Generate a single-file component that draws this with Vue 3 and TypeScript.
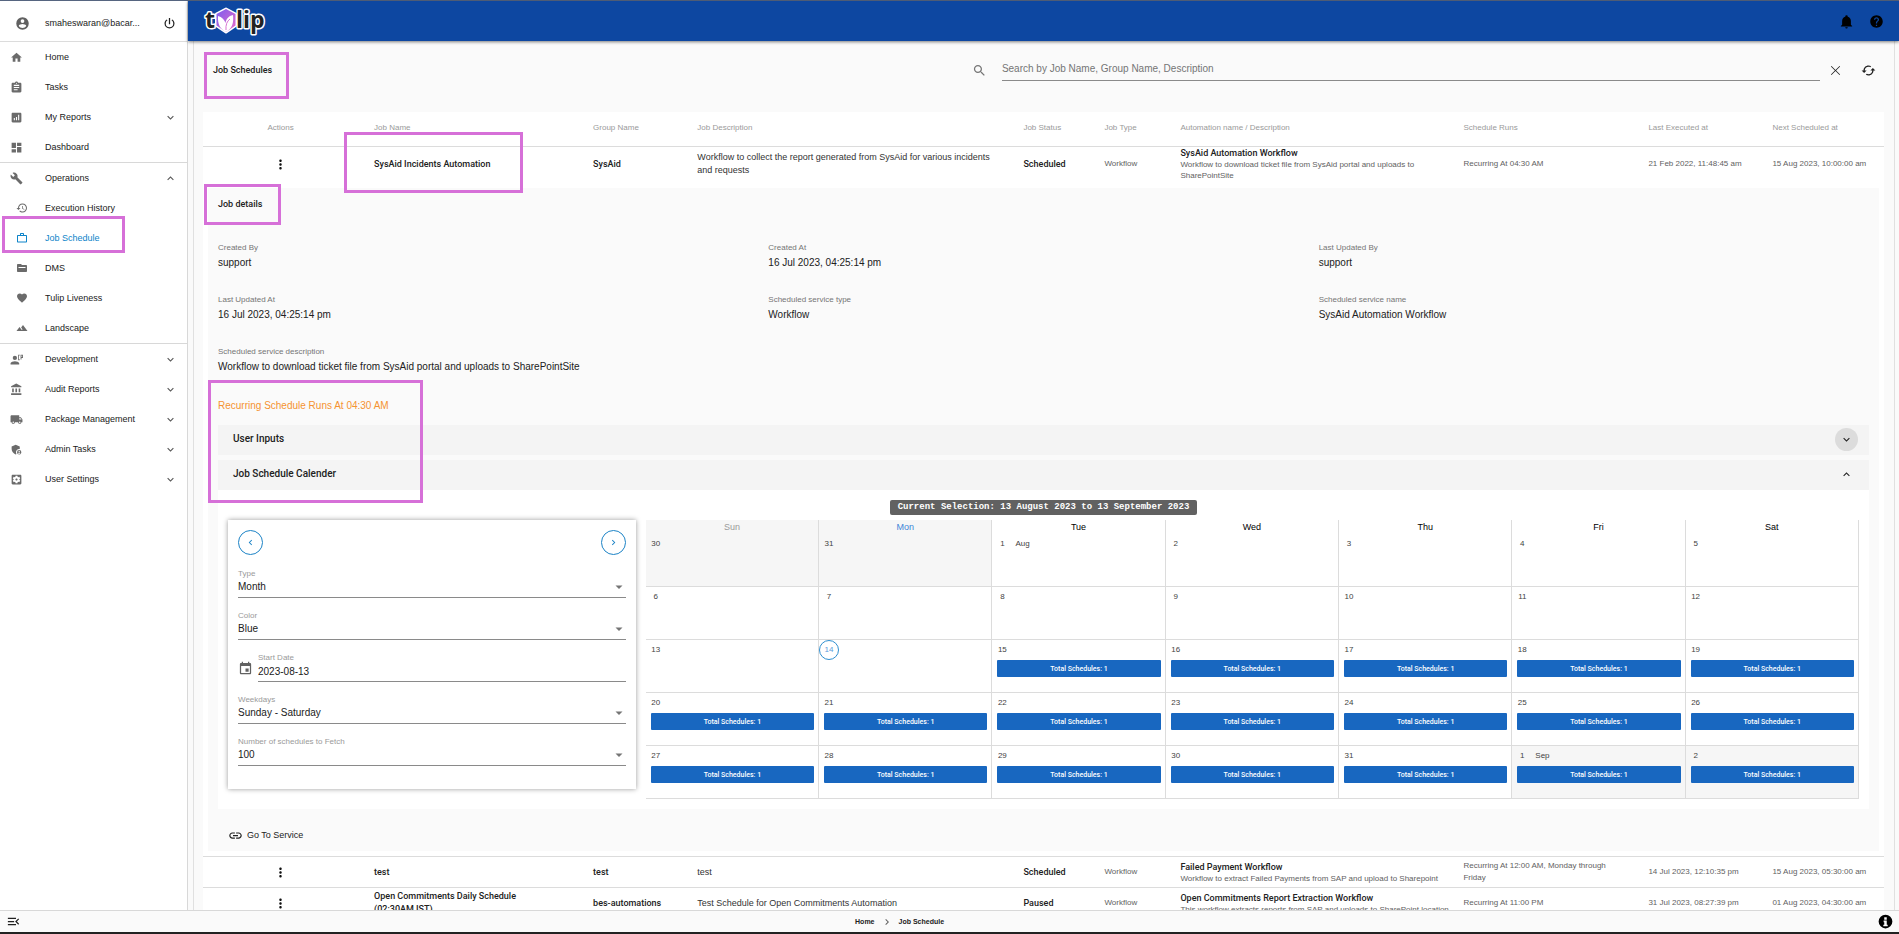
<script setup lang="ts">
import { ref } from 'vue'

interface NavItem {
  label: string
  icon: string
  child?: boolean
  active?: boolean
  arrow?: 'up' | 'down'
}

const icons: Record<string, string> = {
  account: 'M12,19.2C9.5,19.2 7.29,17.92 6,16C6.03,14 10,12.9 12,12.9C14,12.9 17.97,14 18,16C16.71,17.92 14.5,19.2 12,19.2M12,5A3,3 0 0,1 15,8A3,3 0 0,1 12,11A3,3 0 0,1 9,8A3,3 0 0,1 12,5M12,2A10,10 0 0,0 2,12A10,10 0 0,0 12,22A10,10 0 0,0 22,12C22,6.47 17.5,2 12,2Z',
  power: 'M16.56,5.44L15.11,6.89C16.84,7.94 18,9.83 18,12A6,6 0 0,1 12,18A6,6 0 0,1 6,12C6,9.83 7.16,7.94 8.88,6.88L7.44,5.44C5.36,6.88 4,9.28 4,12A8,8 0 0,0 12,20A8,8 0 0,0 20,12C20,9.28 18.64,6.88 16.56,5.44M13,3H11V13H13',
  home: 'M10,20V14H14V20H19V12H22L12,3L2,12H5V20H10Z',
  tasks: 'M19 3h-4.18C14.4 1.84 13.3 1 12 1c-1.3 0-2.4.84-2.82 2H5c-1.1 0-2 .9-2 2v14c0 1.1.9 2 2 2h14c1.1 0 2-.9 2-2V5c0-1.1-.9-2-2-2zm-7 0c.55 0 1 .45 1 1s-.45 1-1 1-1-.45-1-1 .45-1 1-1zm2 14H7v-2h7v2zm3-4H7v-2h10v2zm0-4H7V7h10v2z',
  reports: 'M19 3H5c-1.1 0-2 .9-2 2v14c0 1.1.9 2 2 2h14c1.1 0 2-.9 2-2V5c0-1.1-.9-2-2-2zM9 17H7v-4h2v4zm4 0h-2v-6h2v6zm4 0h-2V7h2v10z',
  dashboard: 'M3 13h8V3H3v10zm0 8h8v-6H3v6zm10 0h8V11h-8v10zm0-18v6h8V3h-8z',
  wrench: 'M22.7 19l-9.1-9.1c.9-2.3.4-5-1.5-6.9-2-2-5-2.4-7.4-1.3L9 6 6 9 1.6 4.7C.4 7.1.9 10.1 2.9 12.1c1.9 1.9 4.6 2.4 6.9 1.5l9.1 9.1c.4.4 1 .4 1.4 0l2.3-2.3c.5-.4.5-1.1.1-1.4z',
  history: 'M13 3c-4.97 0-9 4.03-9 9H1l3.89 3.89.07.14L9 12H6c0-3.87 3.13-7 7-7s7 3.13 7 7-3.13 7-7 7c-1.93 0-3.68-.79-4.94-2.06l-1.42 1.42C8.27 19.99 10.51 21 13 21c4.97 0 9-4.03 9-9s-4.03-9-9-9zm-1 5v5l4.28 2.54.72-1.21-3.5-2.08V8H12z',
  work: 'M14 6V4h-4v2h4zM4 8v11h16V8H4zm16-2c1.11 0 2 .89 2 2v11c0 1.11-.89 2-2 2H4c-1.11 0-2-.89-2-2l.01-11c0-1.11.88-2 1.99-2h4V4c0-1.11.89-2 2-2h4c1.11 0 2 .89 2 2v2h4z',
  folder: 'M10 4H4c-1.1 0-2 .9-2 2v12c0 1.1.9 2 2 2h16c1.1 0 2-.9 2-2V8c0-1.1-.9-2-2-2h-8l-2-2zM5 10h14v2H5z',
  heart: 'M12 21.35l-1.45-1.32C5.4 15.36 2 12.28 2 8.5 2 5.42 4.42 3 7.5 3c1.74 0 3.41.81 4.5 2.09C13.09 3.81 14.76 3 16.5 3 19.58 3 22 5.42 22 8.5c0 3.78-3.4 6.86-8.55 11.54L12 21.35z',
  landscape: 'M14 6l-3.75 5 2.85 3.8-1.6 1.2C9.81 13.75 7 10 7 10l-6 8h22L14 6z',
  developer: 'M9 5a4 4 0 1 1 0 8a4 4 0 1 1 0-8zM1 21v-2c0-2.7 5.3-4 8-4s8 1.3 8 4v2zM15 3h3v1.6h-1.500v7h1.500V13.500h-3zM19.500 3H24v6h-2.800v3h-1.700zM21.200 4.600v2.800h1.200V4.600z',
  bank: 'M4 10v7h3v-7H4zm6 0v7h3v-7h-3zM2 22h19v-3H2v3zm14-12v7h3v-7h-3zm-4.5-9L2 6v2h19V6l-9.5-5z',
  truck: 'M20 8h-3V4H3c-1.1 0-2 .9-2 2v11h2c0 1.66 1.34 3 3 3s3-1.34 3-3h6c0 1.66 1.34 3 3 3s3-1.34 3-3h2v-5l-3-4zM6 18.5c-.83 0-1.5-.67-1.5-1.5s.67-1.5 1.5-1.5 1.5.67 1.5 1.5-.67 1.5-1.5 1.5zm13.5-9l1.96 2.5H17V9.500h2.500zm-1.500 9c-.83 0-1.500-.67-1.500-1.500s.67-1.500 1.500-1.500 1.500.67 1.500 1.500-.67 1.500-1.500 1.500z',
  admin: 'M17 11c.34 0 .67.04 1 .09V6.27L10.5 3 3 6.27v4.91c0 4.54 3.2 8.79 7.5 9.82.55-.13 1.08-.32 1.6-.55-.69-.98-1.1-2.17-1.1-3.45 0-3.31 2.69-6 6-6zM17 13a4 4 0 1 0 0 8a4 4 0 1 0 0-8zM17 14.400a1.200 1.200 0 1 1 0 2.400a1.200 1.200 0 1 1 0-2.400zM14.600 18.800c.6-.8 1.500-1.100 2.400-1.100s1.800.3 2.400 1.100c-1.200 1.500-3.600 1.500-4.800 0z',
  gearbox: 'M12 10c-1.1 0-2 .9-2 2s.9 2 2 2 2-.9 2-2-.9-2-2-2zm7-7H5c-1.11 0-2 .9-2 2v14c0 1.1.89 2 2 2h14c1.11 0 2-.9 2-2V5c0-1.1-.89-2-2-2zm-1.75 9c0 .23-.02.46-.05.68l1.480 1.160c.13.11.17.3.08.45l-1.400 2.420c-.09.15-.27.21-.43.15l-1.740-.7c-.36.28-.76.51-1.180.69l-.26 1.850c-.03.17-.18.3-.35.3h-2.800c-.17 0-.32-.13-.35-.29l-.26-1.850c-.43-.18-.82-.41-1.180-.69l-1.740.7c-.16.06-.34 0-.43-.15l-1.400-2.420c-.09-.15-.05-.34.08-.45l1.480-1.160c-.03-.23-.05-.46-.05-.69 0-.23.02-.46.05-.68l-1.480-1.160c-.13-.11-.17-.3-.08-.45l1.400-2.420c.09-.15.27-.21.43-.15l1.740.7c.36-.28.76-.51 1.180-.69l.26-1.850c.03-.17.18-.3.35-.3h2.800c.17 0 .32.13.35.29l.26 1.850c.43.18.82.41 1.180.69l1.740-.7c.16-.06.34 0 .43.15l1.400 2.420c.09.15.05.34-.08.45l-1.480 1.160c.03.23.05.46.05.69z',
  bell: 'M21,19V20H3V19L5,17V11C5,7.9 7.03,5.17 10,4.29C10,4.19 10,4.1 10,4A2,2 0 0,1 12,2A2,2 0 0,1 14,4C14,4.1 14,4.19 14,4.29C16.97,5.17 19,7.9 19,11V17L21,19M14,21A2,2 0 0,1 12,23A2,2 0 0,1 10,21',
  help: 'M12 2C6.48 2 2 6.48 2 12s4.48 10 10 10 10-4.48 10-10S17.52 2 12 2zm1 17h-2v-2h2v2zm2.070-7.750l-.9.92C13.450 12.900 13 13.500 13 15h-2v-.5c0-1.100.45-2.100 1.170-2.830l1.240-1.260c.37-.36.59-.86.59-1.410 0-1.100-.9-2-2-2s-2 .9-2 2H8c0-2.210 1.790-4 4-4s4 1.790 4 4c0 .88-.36 1.680-.93 2.250z',
  info: 'M12 1a11 11 0 1 0 0 22a11 11 0 1 0 0-22zM10 5h4v4h-4zM9 10.500h5V17h1.500v2.500h-7V17H10v-4H9z',
  search: 'M15.5 14h-.79l-.28-.27C15.41 12.59 16 11.11 16 9.5 16 5.91 13.09 3 9.5 3S3 5.91 3 9.5 5.91 16 9.5 16c1.61 0 3.09-.59 4.23-1.57l.27.28v.79l5 4.99L20.49 19l-4.99-5zm-6 0C7.01 14 5 11.99 5 9.5S7.01 5 9.5 5 14 7.01 14 9.5 11.99 14 9.5 14z',
  close: 'M20.500 4.600L19.400 3.500 12 10.900 4.600 3.500 3.500 4.600 10.900 12 3.500 19.400l1.100 1.100L12 13.100l7.400 7.400 1.100-1.100L13.100 12z',
  cached: 'M19 8l-4 4h3c0 3.31-2.69 6-6 6-1.01 0-1.97-.25-2.8-.7l-1.46 1.46C8.97 19.54 10.43 20 12 20c4.42 0 8-3.58 8-8h3l-4-4zM6 12c0-3.31 2.69-6 6-6 1.01 0 1.97.25 2.8.7l1.46-1.46C15.03 4.46 13.57 4 12 4c-4.42 0-8 3.58-8 8H1l4 4 4-4H6z',
  calendar: 'M17 12h-5v5h5v-5zM16 1v2H8V1H6v2H5c-1.11 0-1.99.9-1.99 2L3 19c0 1.1.89 2 2 2h14c1.1 0 2-.9 2-2V5c0-1.1-.9-2-2-2h-1V1h-2zm3 18H5V8h14v11z',
  link: 'M3.9 12c0-1.71 1.39-3.1 3.1-3.1h4V7H7c-2.76 0-5 2.24-5 5s2.24 5 5 5h4v-1.9H7c-1.71 0-3.1-1.39-3.1-3.1zM8 13h8v-2H8v2zm9-6h-4v1.9h4c1.71 0 3.1 1.39 3.1 3.1s-1.39 3.1-3.1 3.1h-4V17h4c2.76 0 5-2.24 5-5s-2.24-5-5-5z',
  menuOpen: 'M3 18h13v-2H3v2zM3 6v2h13V6H3zm0 7h10v-2H3v2zm18 2.590L17.420 12 21 8.410 19.590 7l-5 5 5 5L21 15.590z',
  more: 'M12 8c1.100 0 2-.9 2-2s-.9-2-2-2-2 .9-2 2 .9 2 2 2zm0 2c-1.100 0-2 .9-2 2s.9 2 2 2 2-.9 2-2-.9-2-2-2zm0 6c-1.100 0-2 .9-2 2s.9 2 2 2 2-.9 2-2-.9-2-2-2z',
  caret: 'M5 9l7 7 7-7z',
  down: 'M7.410 8.580L12 13.170l4.590-4.590L18 10l-6 6-6-6z',
  up: 'M7.410 15.410L12 10.830l4.590 4.580L18 14l-6-6-6 6z',
  left: 'M15.410 16.580L10.830 12l4.580-4.590L14 6l-6 6 6 6z',
  right: 'M8.590 16.580L13.170 12 8.590 7.410 10 6l6 6-6 6z',
}

const navGroups: NavItem[][] = [
  [
    { label: 'Home', icon: 'home' },
    { label: 'Tasks', icon: 'tasks' },
    { label: 'My Reports', icon: 'reports', arrow: 'down' },
    { label: 'Dashboard', icon: 'dashboard' },
  ],
  [
    { label: 'Operations', icon: 'wrench', arrow: 'up' },
    { label: 'Execution History', icon: 'history', child: true },
    { label: 'Job Schedule', icon: 'work', child: true, active: true },
    { label: 'DMS', icon: 'folder', child: true },
    { label: 'Tulip Liveness', icon: 'heart', child: true },
    { label: 'Landscape', icon: 'landscape', child: true },
  ],
  [
    { label: 'Development', icon: 'developer', arrow: 'down' },
    { label: 'Audit Reports', icon: 'bank', arrow: 'down' },
    { label: 'Package Management', icon: 'truck', arrow: 'down' },
    { label: 'Admin Tasks', icon: 'admin', arrow: 'down' },
    { label: 'User Settings', icon: 'gearbox', arrow: 'down' },
  ],
]

interface Job {
  name: string
  group: string
  description: string
  status: string
  type: string
  automation: string
  automationDescription: string
  runs: string
  last: string
  next: string
}

const jobs: Job[] = [
  {
    name: 'SysAid Incidents Automation', group: 'SysAid',
    description: 'Workflow to collect the report generated from SysAid for various incidents and requests',
    status: 'Scheduled', type: 'Workflow', automation: 'SysAid Automation Workflow',
    automationDescription: 'Workflow to download ticket file from SysAid portal and uploads to SharePointSite',
    runs: 'Recurring At 04:30 AM', last: '21 Feb 2022, 11:48:45 am', next: '15 Aug 2023, 10:00:00 am',
  },
  {
    name: 'test', group: 'test', description: 'test', status: 'Scheduled', type: 'Workflow',
    automation: 'Failed Payment Workflow',
    automationDescription: 'Workflow to extract Failed Payments from SAP and upload to Sharepoint',
    runs: 'Recurring At 12:00 AM, Monday through Friday', last: '14 Jul 2023, 12:10:35 pm', next: '15 Aug 2023, 05:30:00 am',
  },
  {
    name: 'Open Commitments Daily Schedule (02:30AM IST)', group: 'bes-automations',
    description: 'Test Schedule for Open Commitments Automation', status: 'Paused', type: 'Workflow',
    automation: 'Open Commitments Report Extraction Workflow',
    automationDescription: 'This workflow extracts reports from SAP and uploads to SharePoint location',
    runs: 'Recurring At 11:00 PM', last: '31 Jul 2023, 08:27:39 pm', next: '01 Aug 2023, 04:30:00 am',
  },
]

const headings = [
  'Actions', 'Job Name', 'Group Name', 'Job Description', 'Job Status', 'Job Type',
  'Automation name / Description', 'Schedule Runs', 'Last Executed at', 'Next Scheduled at',
]

const details = [
  { label: 'Created By', value: 'support' },
  { label: 'Created At', value: '16 Jul 2023, 04:25:14 pm' },
  { label: 'Last Updated By', value: 'support' },
  { label: 'Last Updated At', value: '16 Jul 2023, 04:25:14 pm' },
  { label: 'Scheduled service type', value: 'Workflow' },
  { label: 'Scheduled service name', value: 'SysAid Automation Workflow' },
  { label: 'Scheduled service description', value: 'Workflow to download ticket file from SysAid portal and uploads to SharePointSite' },
]

const search = ref('')
const startDate = ref('2023-08-13')
const filtersTop = [
  { id: 'type', label: 'Type', value: 'Month' },
  { id: 'color', label: 'Color', value: 'Blue' },
]
const filtersBottom = [
  { id: 'weekdays', label: 'Weekdays', value: 'Sunday - Saturday' },
  { id: 'fetch', label: 'Number of schedules to Fetch', value: '100' },
]

const weekdays = ['Sun', 'Mon', 'Tue', 'Wed', 'Thu', 'Fri', 'Sat']

interface Day {
  day: number
  month: string
  outside: boolean
  today: boolean
  scheduled: boolean
}

const firstDay = Date.UTC(2023, 6, 30)
const weeks: Day[][] = Array.from({ length: 5 }, (_, week) =>
  Array.from({ length: 7 }, (_, weekday) => {
    const index = week * 7 + weekday
    const date = new Date(firstDay + index * 86400000)
    const day = date.getUTCDate()
    const month = date.getUTCMonth()
    return {
      day,
      month: day === 1 ? (month === 7 ? 'Aug' : 'Sep') : '',
      outside: month !== 7,
      today: month === 7 && day === 14,
      scheduled: index > 15,
    }
  }),
)
</script>

<template>
  <div class="app">
    <aside class="sidebar">
      <div class="user">
        <svg class="icon user-icon" viewBox="0 0 24 24"><path :d="icons.account" /></svg>
        <span class="user-name">smaheswaran@bacar...</span>
        <button class="icon-button" aria-label="Log out">
          <svg class="icon" viewBox="0 0 24 24"><path :d="icons.power" /></svg>
        </button>
      </div>
      <nav>
        <ul v-for="(group, g) in navGroups" :key="g" class="nav-group">
          <li v-for="item in group" :key="item.label">
            <a href="#" class="nav-item" :class="{ child: item.child, active: item.active }">
              <svg class="icon nav-icon" viewBox="0 0 24 24"><path fill-rule="evenodd" :d="icons[item.icon]" /></svg>
              <span class="nav-label">{{ item.label }}</span>
              <svg v-if="item.arrow" class="icon nav-arrow" viewBox="0 0 24 24"><path :d="icons[item.arrow]" /></svg>
            </a>
          </li>
        </ul>
      </nav>
    </aside>

    <header class="topbar">
      <svg class="logo" viewBox="0 -5 64 40" role="img" aria-label="tulip">
        <defs>
          <linearGradient id="petal" x1="0" y1="0" x2="1" y2="1">
            <stop offset="0" stop-color="#7c5cf0" />
            <stop offset="1" stop-color="#e86cc8" />
          </linearGradient>
        </defs>
        <path d="M24 3l9.500 5v11.500L24 26l-9.500-6.500V8z" fill="#fff" stroke="#fff" stroke-width="3" stroke-linejoin="round" />
        <text class="logo-text" x="3" y="22">t</text>
        <text class="logo-text" x="34" y="22">lip</text>
        <path d="M24 3l9.500 5v11.500L24 26l-9.500-6.500V8z" fill="url(#petal)" />
        <path d="M16 10c4 1 6.500 4 7.500 7c.5-4 3-7 7.500-8c.8 8-.5 13-7 17c-6-3-8.500-8-8-16z" fill="#fff" />
        <path d="M24 24c-.5-5 1-9 4-11" fill="none" stroke="#d873d3" stroke-width="1" />
      </svg>
      <div class="topbar-actions">
        <button class="icon-button" aria-label="Notifications">
          <svg class="icon" viewBox="0 0 24 24"><path :d="icons.bell" /></svg>
        </button>
        <button class="icon-button" aria-label="Help">
          <svg class="icon" viewBox="0 0 24 24"><path :d="icons.help" /></svg>
        </button>
      </div>
    </header>

    <main class="content">
      <div class="toolbar">
        <h1 class="title">Job Schedules</h1>
        <div class="search">
          <label for="search" aria-label="Search jobs">
            <svg class="icon search-icon" viewBox="0 0 24 24"><path :d="icons.search" /></svg>
          </label>
          <input id="search" v-model="search" type="text" placeholder="Search by Job Name, Group Name, Description" />
        </div>
        <button class="icon-button" aria-label="Clear search" @click="search = ''">
          <svg class="icon clear-icon" viewBox="0 0 24 24"><path :d="icons.close" /></svg>
        </button>
        <button class="icon-button refresh" aria-label="Refresh">
          <svg class="icon" viewBox="0 0 24 24"><path :d="icons.cached" /></svg>
        </button>
      </div>

      <table class="jobs">
        <colgroup>
          <col class="c-actions" /><col class="c-name" /><col class="c-group" /><col class="c-desc" />
          <col class="c-status" /><col class="c-type" /><col class="c-auto" /><col class="c-runs" />
          <col class="c-last" /><col class="c-next" />
        </colgroup>
        <thead>
          <tr>
            <th v-for="h in headings" :key="h" scope="col">{{ h }}</th>
          </tr>
        </thead>
        <tbody v-for="(job, index) in jobs" :key="job.name">
          <tr class="job" :class="{ expanded: index === 0 }">
            <td>
              <button class="icon-button" :aria-label="'Actions for ' + job.name">
                <svg class="icon" viewBox="0 0 24 24"><path :d="icons.more" /></svg>
              </button>
            </td>
            <td class="strong name">{{ job.name }}</td>
            <td class="strong">{{ job.group }}</td>
            <td class="description">{{ job.description }}</td>
            <td class="strong">{{ job.status }}</td>
            <td>{{ job.type }}</td>
            <td>
              <div class="strong automation">{{ job.automation }}</div>
              <div class="automation-text">{{ job.automationDescription }}</div>
            </td>
            <td class="runs">{{ job.runs }}</td>
            <td>{{ job.last }}</td>
            <td>{{ job.next }}</td>
          </tr>
          <tr v-if="index === 0">
            <td colspan="10" class="expansion">
              <section class="details">
                <h2 class="title">Job details</h2>
                <dl class="facts">
                  <div v-for="item in details" :key="item.label" class="fact">
                    <dt>{{ item.label }}</dt>
                    <dd>{{ item.value }}</dd>
                  </div>
                </dl>
                <p class="recurring">Recurring Schedule Runs At 04:30 AM</p>

                <button class="panel-head">
                  <span>User Inputs</span>
                  <span class="panel-toggle shaded"><svg class="icon" viewBox="0 0 24 24"><path :d="icons.down" /></svg></span>
                </button>
                <button class="panel-head open">
                  <span>Job Schedule Calender</span>
                  <span class="panel-toggle"><svg class="icon" viewBox="0 0 24 24"><path :d="icons.up" /></svg></span>
                </button>
                <div class="panel-body">
                  <span class="selection">Current Selection: 13 August 2023 to 13 September 2023</span>
                  <div class="schedule">
                    <form class="filters" @submit.prevent>
                      <div class="pager">
                        <button type="button" aria-label="Previous month">
                          <svg class="icon" viewBox="0 0 24 24"><path :d="icons.left" /></svg>
                        </button>
                        <button type="button" aria-label="Next month">
                          <svg class="icon" viewBox="0 0 24 24"><path :d="icons.right" /></svg>
                        </button>
                      </div>
                      <div v-for="f in filtersTop" :key="f.id" class="field">
                        <label :for="f.id">{{ f.label }}</label>
                        <div class="control">
                          <select :id="f.id"><option>{{ f.value }}</option></select>
                          <svg class="icon caret" viewBox="0 0 24 24"><path :d="icons.caret" /></svg>
                        </div>
                      </div>
                      <div class="date-field">
                        <svg class="icon date-icon" viewBox="0 0 24 24"><path :d="icons.calendar" /></svg>
                        <div class="field">
                          <label for="start-date">Start Date</label>
                          <div class="control"><input id="start-date" v-model="startDate" type="text" readonly /></div>
                        </div>
                      </div>
                      <div v-for="f in filtersBottom" :key="f.id" class="field">
                        <label :for="f.id">{{ f.label }}</label>
                        <div class="control">
                          <select :id="f.id"><option>{{ f.value }}</option></select>
                          <svg class="icon caret" viewBox="0 0 24 24"><path :d="icons.caret" /></svg>
                        </div>
                      </div>
                    </form>

                    <table class="calendar">
                      <thead>
                        <tr>
                          <th v-for="(d, i) in weekdays" :key="d" scope="col" :class="{ outside: i < 2, current: i === 1 }">{{ d }}</th>
                        </tr>
                      </thead>
                      <tbody>
                        <tr v-for="(week, w) in weeks" :key="w">
                          <td v-for="d in week" :key="d.day" :class="{ outside: d.outside }">
                            <div class="day">
                              <span class="day-number" :class="{ today: d.today }">{{ d.day }}</span>
                              <span v-if="d.month">{{ d.month }}</span>
                            </div>
                            <button v-if="d.scheduled" class="event">Total Schedules: 1</button>
                          </td>
                        </tr>
                      </tbody>
                    </table>
                  </div>
                </div>
                <a href="#" class="service-link">
                  <svg class="icon" viewBox="0 0 24 24"><path :d="icons.link" /></svg>
                  <span>Go To Service</span>
                </a>
              </section>
            </td>
          </tr>
        </tbody>
      </table>
    </main>

    <footer class="footer">
      <button class="icon-button" aria-label="Collapse menu">
        <svg class="icon" viewBox="0 0 24 24"><path :d="icons.menuOpen" /></svg>
      </button>
      <nav class="breadcrumb" aria-label="Breadcrumb">
        <a href="#">Home</a>
        <svg class="icon" viewBox="0 0 24 24"><path :d="icons.right" /></svg>
        <a href="#">Job Schedule</a>
      </nav>
      <button class="icon-button info" aria-label="Information">
        <svg class="icon" viewBox="0 0 24 24"><path fill-rule="evenodd" :d="icons.info" /></svg>
      </button>
    </footer>

    <div class="marks" aria-hidden="true">
      <i class="mark mark-title"></i>
      <i class="mark mark-job"></i>
      <i class="mark mark-details"></i>
      <i class="mark mark-nav"></i>
      <i class="mark mark-panels"></i>
    </div>
  </div>
</template>

<style>
body {
  margin: 0;
  overflow: hidden;
}
</style>

<style scoped>
.app {
  position: relative;
  box-sizing: border-box;
  height: 100vh;
  display: grid;
  grid-template-columns: 188px minmax(0, 1fr);
  grid-template-rows: 40px minmax(0, 1fr) 24px;
  border-top: 1px solid #566580;
  background: #fafafa;
  color: #212121;
  font-family: "Liberation Sans", Arial, sans-serif;
  font-size: 9px;
  line-height: 13px;
}

.app *,
.app *::before {
  box-sizing: border-box;
}

button,
input,
select {
  margin: 0;
  padding: 0;
  border: 0;
  outline: 0;
  background: none;
  color: inherit;
  font: inherit;
}

button {
  cursor: pointer;
}

a {
  color: inherit;
  text-decoration: none;
}

.icon {
  display: block;
  flex: none;
  width: 15px;
  height: 15px;
  fill: currentColor;
}

.icon-button {
  display: flex;
  align-items: center;
  justify-content: center;
}

/* Sidebar */
.sidebar {
  grid-row: 1 / 3;
  border-right: 1px solid #d8d8d8;
  background: #fff;
}

.user {
  display: flex;
  align-items: center;
  height: 41px;
  padding: 5px 10px 0 15px;
  border-bottom: 1px solid #dcdcdc;
}

.user-icon {
  color: #616161;
}

.user-name {
  flex: 1;
  margin-left: 15px;
}

.nav-group {
  margin: 0;
  padding: 0;
  list-style: none;
  border-bottom: 1px solid #d8d8d8;
}

.nav-group:last-child {
  border-bottom: 0;
}

.nav-item {
  display: flex;
  align-items: center;
  height: 30px;
  padding: 0 10px;
}

.nav-icon {
  width: 13px;
  height: 13px;
  margin-right: 22px;
  color: #6b6b6b;
}

.nav-item.child .nav-icon {
  width: 12px;
  height: 12px;
  margin: 0 17px 0 6px;
}

.nav-item.active,
.nav-item.active .nav-icon {
  color: #0d84c9;
}

.nav-label {
  flex: 1;
}

.nav-arrow {
  width: 13px;
  height: 13px;
  color: #555;
}

/* Top bar */
.topbar {
  position: relative;
  z-index: 1;
  display: flex;
  align-items: center;
  justify-content: space-between;
  padding: 0 15px 0 14px;
  background: #0d47a1;
  box-shadow: 0 1px 3px rgba(0, 0, 0, 0.5);
}

.logo {
  width: 64px;
  height: 40px;
}

.logo-text {
  font-family: "Open Sans", "Noto Sans", sans-serif;
  font-size: 23px;
  font-weight: 700;
  fill: #222;
  stroke: #fff;
  stroke-width: 3px;
  stroke-linejoin: round;
  paint-order: stroke;
}

.topbar-actions {
  display: flex;
  gap: 15px;
  color: #000;
}

/* Main area */
.content {
  min-width: 0;
  margin: 0 4px 0 5px;
  padding: 0 10px 0 9px;
  overflow: hidden;
  border: solid #e0e0e0;
  border-width: 0 1px;
}

.toolbar {
  display: flex;
  align-items: center;
  height: 71px;
  padding: 0 8px 13px 10px;
}

.title {
  flex: 1;
  margin: 0;
  font-family: Roboto, sans-serif;
  font-size: 9px;
  font-weight: 500;
  line-height: 16px;
}

.search {
  display: flex;
  align-items: center;
  gap: 15px;
  width: 51%;
  margin-right: 9px;
}

.search-icon {
  color: #757575;
}

.search input {
  flex: 1;
  height: 22px;
  padding-bottom: 3px;
  border-bottom: 1px solid #8a8a8a;
  font-size: 10px;
}

.search input::placeholder {
  color: #757575;
  opacity: 1;
}

.clear-icon {
  width: 13px;
  height: 13px;
}

.refresh {
  margin-left: 19px;
}

.jobs {
  width: 100%;
  table-layout: fixed;
  border-collapse: separate;
  border-spacing: 0;
  background: #fff;
  font-size: 8px;
  line-height: 12px;
  color: #616161;
}

.c-actions { width: 9.7%; }
.c-name { width: 13.03%; }
.c-group { width: 6.2%; }
.c-desc { width: 19.4%; }
.c-status { width: 4.82%; }
.c-type { width: 4.52%; }
.c-auto { width: 16.84%; }
.c-runs { width: 11%; }
.c-last { width: 7.38%; }
.c-next { width: 7.11%; }

.jobs th,
.jobs td {
  padding: 0 0 0 8px;
  text-align: left;
  font-weight: 400;
}

.jobs > thead th {
  height: 35px;
  padding-bottom: 2px;
  border-bottom: 1px solid #dcdcdc;
  color: #9a9a9a;
}

.jobs > thead th:first-child {
  padding: 0 8px 2px 0;
  text-align: center;
}

.job > td {
  height: 31px;
  border-bottom: 1px solid #dcdcdc;
}

.job > td:first-child {
  padding: 0 8px 0 0;
  color: #111;
}

.job.expanded > td {
  height: 36px;
  padding-bottom: 2px;
  border-bottom: 0;
}

.job .icon-button {
  width: 100%;
}

.jobs .strong {
  font-family: Roboto, sans-serif;
  font-size: 9px;
  font-weight: 500;
  line-height: 13px;
  color: #212121;
}

.jobs .automation {
  line-height: 12px;
}

.jobs .name {
  padding-right: 30px;
}

.jobs .description {
  padding-right: 15px;
  font-size: 9px;
  line-height: 13px;
  color: #333;
}

.jobs .runs {
  padding-right: 15px;
}

.automation-text {
  line-height: 11px;
}

/* Expanded row */
.jobs .expansion {
  padding: 5px;
  border-bottom: 1px solid #dcdcdc;
}

.details {
  padding: 8px 10px 6px;
  background: #fafafa;
  color: #212121;
}

.facts {
  display: grid;
  grid-template-columns: repeat(3, minmax(0, 1fr));
  row-gap: 25px;
  margin: 31px 0 25px;
}

.fact:last-child {
  grid-column: 1 / -1;
}

.facts dt {
  color: #757575;
  line-height: 10px;
}

.facts dd {
  margin: 3px 0 0;
  font-size: 10px;
  line-height: 14px;
}

.recurring {
  margin: 0 0 12px;
  color: #f59331;
  font-size: 10px;
  line-height: 14px;
}

.panel-head {
  display: flex;
  align-items: center;
  justify-content: space-between;
  width: 100%;
  height: 30px;
  padding: 0 11px 2px 15px;
  background: #f4f4f4;
  font-family: Roboto, sans-serif;
  font-size: 10px;
  font-weight: 500;
}

.panel-head.open {
  margin-top: 5px;
}

.panel-toggle {
  display: grid;
  place-items: center;
  width: 23px;
  height: 23px;
  border-radius: 50%;
}

.panel-toggle.shaded {
  background: #dcdcdc;
}

.panel-toggle .icon {
  width: 13px;
  height: 13px;
}

.panel-body {
  display: flex;
  flex-direction: column;
  align-items: center;
  gap: 5px;
  padding: 10px;
  background: #fff;
}

.selection {
  height: 15px;
  padding: 0 8px;
  border-radius: 2px;
  background: #616161;
  color: #fff;
  font-family: "Liberation Mono", "Courier New", monospace;
  font-size: 9px;
  font-weight: 700;
  line-height: 15px;
}

.schedule {
  display: grid;
  grid-template-columns: 25% minmax(0, 1fr);
  align-items: start;
  gap: 10px;
  width: 100%;
}

.filters {
  padding: 10px 10px 23px;
  background: #fff;
  box-shadow: 0 0 5px rgba(0, 0, 0, 0.4);
}

.pager {
  display: flex;
  justify-content: space-between;
  margin-bottom: 1px;
}

.pager button {
  display: grid;
  place-items: center;
  width: 25px;
  height: 25px;
  border: 1px solid #1c83c6;
  border-radius: 50%;
  color: #1c83c6;
}

.pager .icon {
  width: 11px;
  height: 11px;
}

.field {
  flex: 1;
  height: 42px;
  padding-top: 13px;
  border-bottom: 1px solid #8a8a8a;
}

.field label {
  display: block;
  line-height: 10px;
  color: #9a9a9a;
}

.control {
  display: flex;
  align-items: center;
  height: 16px;
}

.control select,
.control input {
  flex: 1;
  height: 16px;
  appearance: none;
  font-size: 10px;
}

.caret {
  width: 12px;
  height: 12px;
  margin-right: 1px;
  color: #757575;
}

.date-field {
  display: flex;
  align-items: center;
  gap: 5px;
}

.date-icon {
  margin-top: 14px;
  color: #616161;
}

.calendar {
  width: 100%;
  table-layout: fixed;
  border-collapse: separate;
  border-spacing: 0;
  color: #424242;
}

.calendar th {
  height: 14px;
  padding: 0;
  border-right: 1px solid #dcdcdc;
  color: #000;
  font-size: 9px;
  line-height: 12px;
  text-align: center;
}

.calendar th.outside {
  background: #f6f6f6;
  color: #9a9a9a;
}

.calendar th.current {
  color: #3f86d8;
}

.calendar td {
  height: 53px;
  padding: 0;
  border: solid #dcdcdc;
  border-width: 0 1px 1px 0;
  vertical-align: top;
}

.calendar td.outside {
  background: #f6f6f6;
}

.day {
  display: flex;
  align-items: center;
  gap: 3px;
  height: 20px;
}

.day-number {
  width: 20px;
  height: 20px;
  line-height: 19px;
  text-align: center;
}

.day-number.today {
  border: 1px solid #2f8fd0;
  border-radius: 50%;
  color: #5b9bdc;
  line-height: 18px;
}

.event {
  display: block;
  width: calc(100% - 9px);
  height: 17px;
  margin-left: 5px;
  border-radius: 1px;
  background: #1867c0;
  color: #fff;
  font-family: Roboto, sans-serif;
  font-size: 7px;
  font-weight: 500;
}

.service-link {
  display: flex;
  align-items: center;
  gap: 4px;
  width: max-content;
  height: 20px;
  margin: 16px 0 0 10px;
  font-size: 9px;
}

/* Footer */
.footer {
  grid-column: 1 / -1;
  z-index: 1;
  display: grid;
  grid-template-columns: 17fr auto 19fr;
  align-items: center;
  padding: 0 6px;
  border-top: 1px solid #d8d8d8;
  border-bottom: 2px solid #222;
  background: #fafafa;
}

.footer > .icon-button {
  width: 15px;
}

.footer > .info {
  justify-self: end;
  color: #000;
}

.breadcrumb {
  display: flex;
  align-items: center;
  gap: 6px;
  font-size: 7px;
  font-weight: 700;
}

.breadcrumb .icon {
  width: 12px;
  height: 12px;
  color: #616161;
}

/* Callout frames over the page */
.mark {
  position: absolute;
  z-index: 2;
  border: 3px solid #d670d8;
  pointer-events: none;
}

.mark-title { left: 204px; top: 51px; width: 85px; height: 47px; }
.mark-job { left: 344px; top: 131px; width: 179px; height: 61px; }
.mark-details { left: 204px; top: 183px; width: 77px; height: 41px; }
.mark-nav { left: 2px; top: 215px; width: 123px; height: 37px; }
.mark-panels { left: 208px; top: 379px; width: 215px; height: 123px; }
</style>
